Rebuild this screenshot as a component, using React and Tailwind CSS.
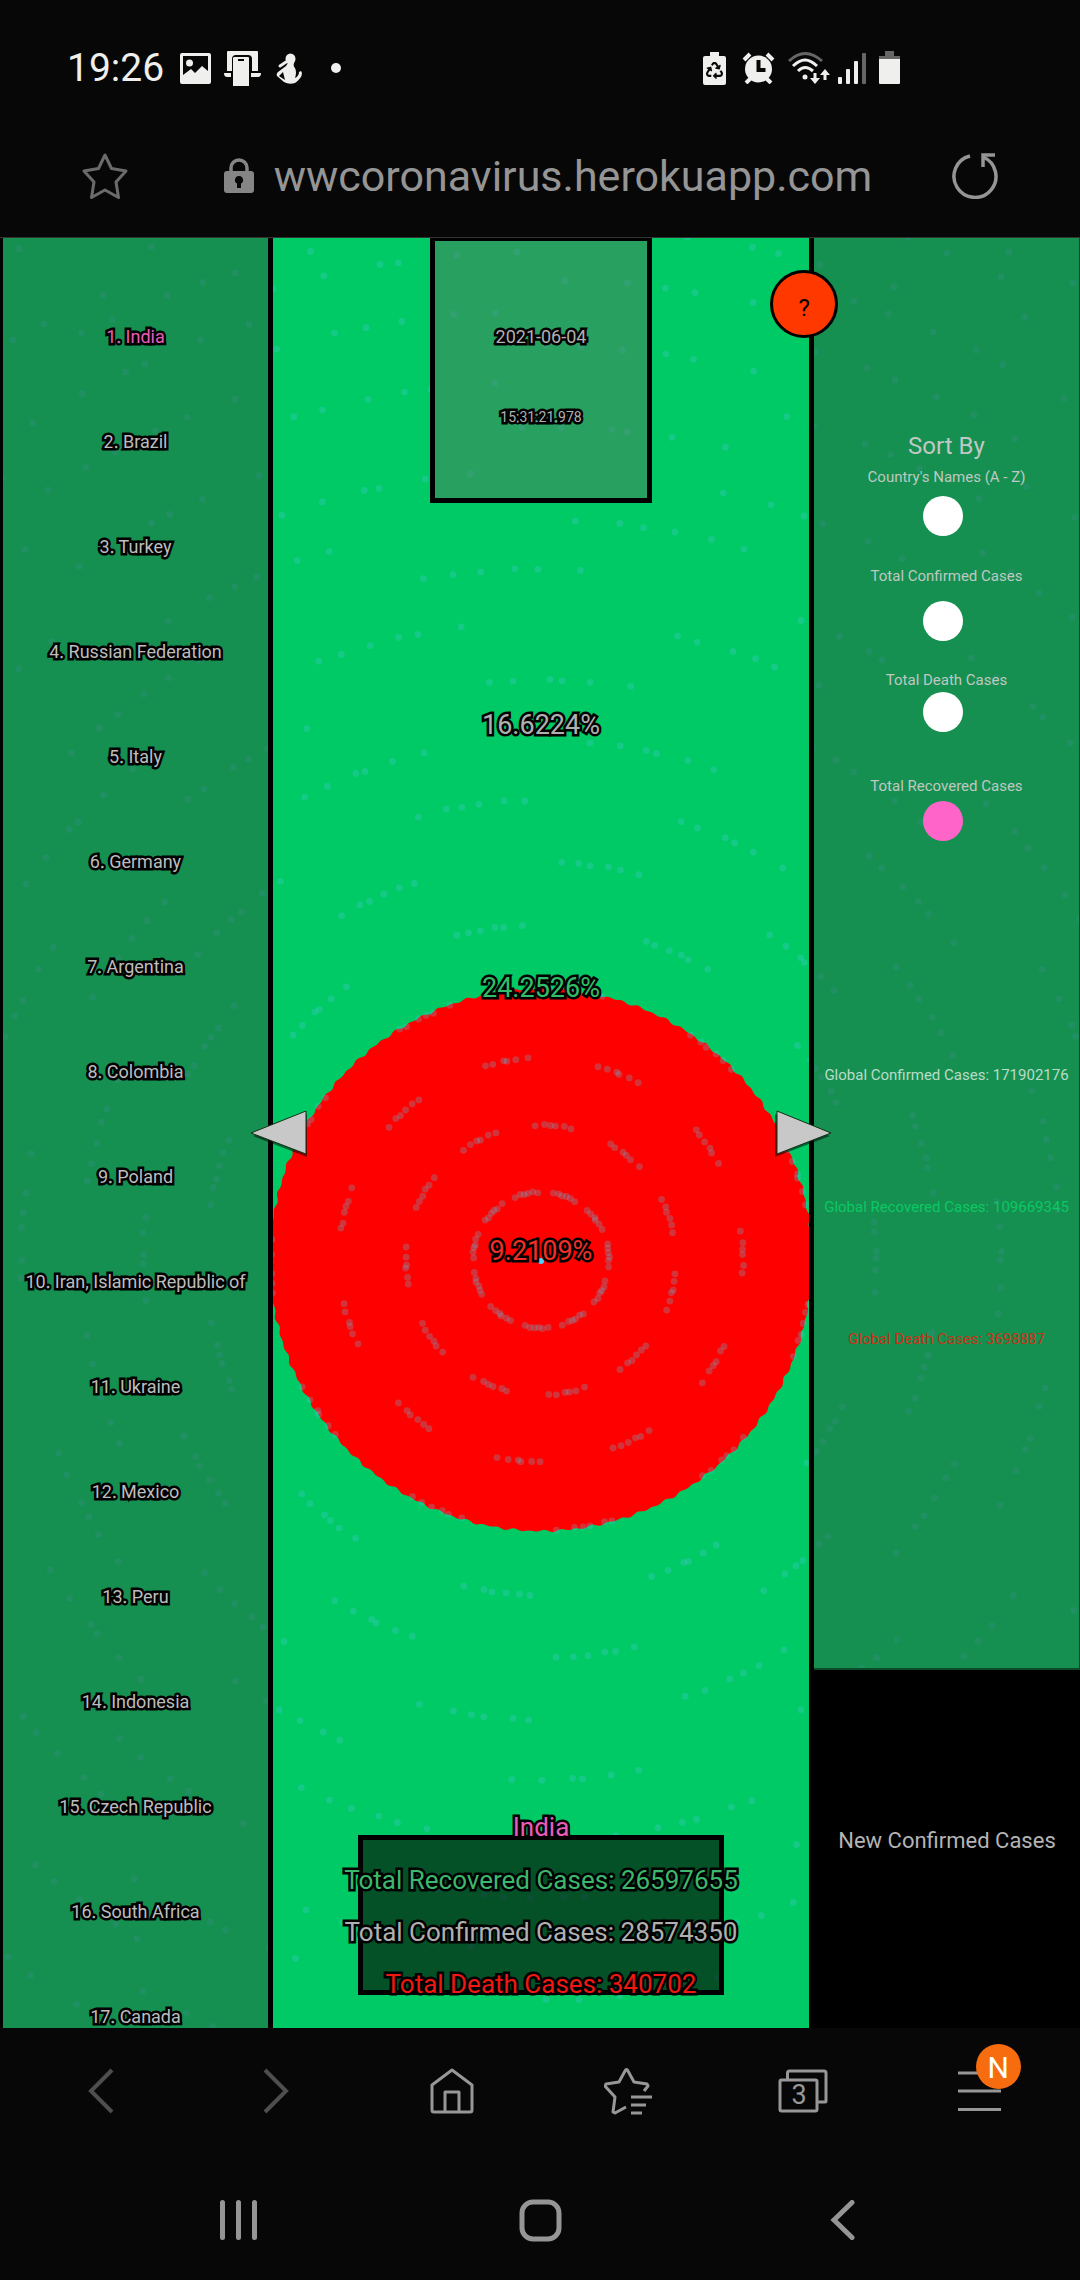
import React from "react";
import { FaRecycle } from "react-icons/fa";

const countries = [
  "India", "Brazil", "Turkey", "Russian Federation", "Italy", "Germany",
  "Argentina", "Colombia", "Poland", "Iran, Islamic Republic of", "Ukraine",
  "Mexico", "Peru", "Indonesia", "Czech Republic", "South Africa", "Canada",
];

const sortOptions = [
  { id: "name", label: "Country's Names (A - Z)", row: "h-[99px] gap-[7px]" },
  { id: "confirmed", label: "Total Confirmed Cases", row: "h-[104px] gap-[13px]" },
  { id: "death", label: "Total Death Cases", row: "h-[106px] gap-0" },
  { id: "recovered", label: "Total Recovered Cases", row: "h-[67px] gap-[3px]" },
];

const outline = "[-webkit-text-stroke:5px_#000] [paint-order:stroke_fill]";

const CX = 541;
const CY = 1022;
const radii = [68, 135, 202, 270, 335, 398, 460, 520, 580, 638, 691, 740, 789, 833, 878, 914, 949, 980, 1008, 1034, 1060, 1086, 1112, 1138];
const phases = [-69, -84, -67, -83, -66, -81, -98, -77, -88, -71, -93, -80];
const offsets = [-6.2, -3.8, -1.4, 0.3, 2.6, 5.6];

const dots = radii.flatMap((r, ring) =>
  Array.from({ length: 11 }).flatMap((_, c) =>
    offsets.map((o, k) => {
      const stretch = ring === 0 ? 1.7 : ring === 1 ? 1.3 : ring > 5 ? 1.15 : 1;
      const jitter = Math.sin(ring * 5.1 + c * 3.7 + k * 2.3);
      const a = ((phases[ring % 12] + c * 32.73 + o * stretch + jitter * 0.5) * Math.PI) / 180;
      const d = r + jitter * 0.7;
      return [(CX + d * Math.cos(a)).toFixed(1), (CY + d * Math.sin(a)).toFixed(1)];
    })
  )
);

const disc = Array.from({ length: 720 }, (_, i) => {
  const a = (i / 720) * Math.PI * 2;
  const r = 271 + 0.9 * Math.sin(a * 108) + 0.6 * Math.sin(a * 67);
  return `${(CX + r * Math.cos(a)).toFixed(1)},${(CY + r * Math.sin(a)).toFixed(1)}`;
}).join(" ");

function Field() {
  return (
    <svg className="absolute inset-0 h-full w-full" viewBox="0 0 1080 1790" preserveAspectRatio="xMidYMid slice" aria-hidden="true">
      <rect width="1080" height="1790" fill="#00ca65" />
      <polygon points={disc} fill="#ff0000" />
      {dots.map(([x, y], i) => (
        <circle key={i} cx={x} cy={y} r="3.4" fill="#50c8e6" fillOpacity="0.26" />
      ))}
      <circle cx="541" cy="1023" r="3" fill="#50d2ff" />
    </svg>
  );
}

function StatusBar() {
  return (
    <div className="flex h-24 items-center justify-between pr-[180px] pl-[67px] pt-10 text-[#efefed]">
      <div className="flex items-center">
        <span className="text-[39px] leading-[40px]">19:26</span>
        <svg className="ml-4 h-[31px] w-[31px]" viewBox="0 0 31 31" fill="currentColor">
          <path fillRule="evenodd" d="M2 0h27a2 2 0 0 1 2 2v27a2 2 0 0 1-2 2H2a2 2 0 0 1-2-2V2a2 2 0 0 1 2-2ZM3 3v19l8-6 4 4 7-7 6 5V3Z" />
          <circle cx="9.500" cy="10" r="3.500" />
        </svg>
        <svg className="ml-[13px] h-[35px] w-[37px]" viewBox="0 0 37 35" fill="currentColor">
          <path d="M4 0h29a1 1 0 0 1 1 1v19h-6V8q0-4-4-4H12q-4 0-4 4v12H3V1a1 1 0 0 1 1-1ZM0 22h7v4H3q-3 0-3-4ZM27 22h10q0 4-3 4h-7Z" />
          <path fillRule="evenodd" d="M11 6h13q1 0 1 1v28H9V7q0-1 2-1ZM14 8v2h6V8Z" />
        </svg>
        <svg className="ml-[15px] h-[31px] w-[28px]" viewBox="0 0 28 31" fill="currentColor">
          <ellipse cx="14.500" cy="6" rx="5" ry="5.500" />
          <path d="m4 13 6-4" fill="none" stroke="currentColor" strokeWidth="3" strokeLinecap="round" />
          <path fillRule="evenodd" d="M12 10h6q-1 3 1 5 2 4 0 10 4-2 4-6l2-1 1 2q0 5-7 10-6 2-11-1l-7-6q-1-2 1-4l8-6ZM7 19l-4 4 6 4Z" />
        </svg>
        <span className="ml-[27px] h-[10px] w-[10px] rounded-full bg-[#efefed]" />
      </div>
      <div className="flex items-center">
        <span className="relative flex h-[33px] w-[23px] items-center justify-center">
          <svg className="absolute inset-0 h-full w-full" viewBox="0 0 23 33" fill="currentColor">
            <path d="M7 0h9v4h5a2 2 0 0 1 2 2v25a2 2 0 0 1-2 2H2a2 2 0 0 1-2-2V6a2 2 0 0 1 2-2h5z" />
          </svg>
          <FaRecycle className="relative mt-1 h-[17px] w-[17px] text-[#070707]" />
        </span>
        <svg className="ml-4 h-[32px] w-[33px]" viewBox="0 0 33 32" fill="currentColor">
          <circle cx="16.500" cy="17" r="13.500" />
          <path d="M2 8 8 2M31 8l-6-6" stroke="currentColor" strokeWidth="4" />
          <path d="m4 31 5-5M29 31l-5-5" stroke="currentColor" strokeWidth="4" />
          <path d="M16.500 8v10h7" fill="none" stroke="#070707" strokeWidth="4" />
        </svg>
        <svg className="ml-[13px] h-[34px] w-[42px]" viewBox="0 0 42 34" fill="none" stroke="currentColor" strokeWidth="3">
          <path d="M1 10q16-15 33 0" stroke="#666" />
          <path d="M5 15q12-12 24 0M10 20q7-7 15 0" />
          <circle cx="17" cy="26" r="2.500" fill="currentColor" stroke="none" />
          <path d="M27 22v7M37 29v-7" />
          <path d="M22 27h10l-5 6zM32 24h10l-5-6z" fill="currentColor" stroke="none" />
        </svg>
        <svg className="ml-2 h-[31px] w-[28px]" viewBox="0 0 28 31" fill="currentColor">
          <rect y="24" width="4" height="7" rx="1" />
          <rect x="8" y="16" width="4" height="15" rx="1" />
          <rect x="16" y="8" width="4" height="23" rx="1" />
          <rect x="24" width="4" height="31" rx="1" fill="#666" />
        </svg>
        <svg className="ml-[13px] h-[34px] w-[21px]" viewBox="0 0 21 34">
          <path d="M6 0h9v5h6v4H0V5h6z" fill="#666" />
          <path d="M0 8h21v24q0 1-1 1H1q-1 0-1-1z" fill="#efefed" />
        </svg>
      </div>
    </div>
  );
}

function AddressBar() {
  return (
    <div className="flex h-[142px] items-center border-b border-[#333] pr-[82px] pl-[82px] pt-[18px]">
      <button aria-label="Add bookmark" className="text-[#6b6b6b]">
        <svg className="h-[46px] w-[46px]" viewBox="0 0 46 46" fill="none" stroke="currentColor" strokeWidth="3" strokeLinejoin="round">
          <path d="m23 2 6.500 13.500L44 18 34 29l2.500 15.500L23 37 9.500 44.500 12 29 2 18l14.500-2.500z" />
        </svg>
      </button>
      <div className="flex flex-1 items-center justify-center pl-4 text-[#959595]">
        <svg className="h-[35px] w-[30px]" viewBox="0 0 30 35" fill="none">
          <path d="M7 14V10a8 8 0 0 1 16 0v4" stroke="#858585" strokeWidth="3.500" />
          <path fillRule="evenodd" fill="#858585" d="M3 13h24a3 3 0 0 1 3 3v16a3 3 0 0 1-3 3H3a3 3 0 0 1-3-3V16a3 3 0 0 1 3-3Zm12 5a4 4 0 0 0-2 7.500V30h4v-4.500A4 4 0 0 0 15 18Z" />
        </svg>
        <span className="ml-5 text-[43px] leading-[50px]">wwcoronavirus.herokuapp.com</span>
      </div>
      <button aria-label="Reload" className="text-[#959595]">
        <svg className="h-[46px] w-[46px]" viewBox="0 0 46 46" fill="none" stroke="currentColor" strokeWidth="3.500">
          <path d="M18 3A21 21 0 1 0 31 4" />
          <path d="M43 2H31v12" />
        </svg>
      </button>
    </div>
  );
}

function BrowserTools() {
  return (
    <nav className="grid h-[126px] grid-cols-6 place-items-center px-[13px] text-[#979797]">
      <button aria-label="Back" className="text-[#4e4e4e]">
        <svg className="h-[46px] w-[26px]" viewBox="0 0 26 46" fill="none" stroke="currentColor" strokeWidth="4"><path d="M24 2 3 23l21 21" /></svg>
      </button>
      <button aria-label="Forward" className="text-[#4e4e4e]">
        <svg className="h-[46px] w-[26px]" viewBox="0 0 26 46" fill="none" stroke="currentColor" strokeWidth="4"><path d="m2 2 21 21L2 44" /></svg>
      </button>
      <button aria-label="Home">
        <svg className="h-[46px] w-[44px]" viewBox="0 0 44 46" fill="none" stroke="currentColor" strokeWidth="3" strokeLinejoin="round">
          <path d="M2 17 22 2l20 15v25q0 2-2 2H4q-2 0-2-2z" />
          <path d="M15 44V24h14v20" />
        </svg>
      </button>
      <button aria-label="Bookmarks">
        <svg className="h-[48px] w-[48px]" viewBox="0 0 48 48" fill="none" stroke="currentColor" strokeWidth="3" strokeLinejoin="round">
          <path d="m40 24 4-5-1-2-13-2-6-11q-1.500-3-3 0l-6 11-13 2-1 2 10 11-2 15 2 1 11-6" />
          <path d="M27 30h21M27 38h15M27 46h11" />
        </svg>
      </button>
      <button aria-label="Tabs, 3 open" className="relative h-[44px] w-[50px]">
        <svg className="absolute inset-0 h-full w-full" viewBox="0 0 50 44" fill="none" stroke="currentColor" strokeWidth="3">
          <rect x="2" y="11" width="37" height="31" rx="1.500" />
          <path d="M9.500 11V4q0-2 2-2H46q2 0 2 2v28q0 1-1 1h-8" />
        </svg>
        <span className="absolute top-[10px] left-[2px] w-[37px] text-center text-[27px] leading-[32px]">3</span>
      </button>
      <button aria-label="Menu" className="relative">
        <svg className="h-[42px] w-[43px]" viewBox="0 0 43 42" stroke="currentColor" strokeWidth="3"><path d="M0 3h43M0 21h43M0 39.500h43" /></svg>
        <span className="absolute -top-[26px] left-[18px] flex h-[45px] w-[45px] items-center justify-center rounded-full bg-[#f76c0f] pt-0.5 text-[30px] leading-none text-white">N</span>
      </button>
    </nav>
  );
}

function SystemNav() {
  return (
    <nav className="grid h-[126px] grid-cols-3 place-items-center px-[87px] pt-[6px] text-[#959595]">
      <button aria-label="Recent apps">
        <svg className="h-[40px] w-[37px]" viewBox="0 0 37 40" stroke="currentColor" strokeWidth="5" strokeLinecap="round"><path d="M2.500 2.500v35M18.500 2.500v35M34.500 2.500v35" /></svg>
      </button>
      <button aria-label="Home screen">
        <svg className="h-[43px] w-[43px]" viewBox="0 0 43 43" fill="none" stroke="currentColor" strokeWidth="5"><rect x="3" y="3" width="37" height="37" rx="11" /></svg>
      </button>
      <button aria-label="Go back">
        <svg className="h-[40px] w-[26px]" viewBox="0 0 26 40" fill="none" stroke="currentColor" strokeWidth="5" strokeLinecap="round"><path d="M23 2.500 5 20l18 17.500" /></svg>
      </button>
    </nav>
  );
}

export default function App() {
  return (
    <div className="flex h-screen w-full flex-col overflow-hidden bg-[#070707] font-[Roboto,sans-serif]">
      <header>
        <StatusBar />
        <AddressBar />
      </header>

      <main className="relative min-h-0 flex-1 overflow-hidden bg-black">
        <Field />
        <div className="relative grid h-full grid-cols-[270fr_536fr_271fr] grid-rows-[minmax(0,1fr)] border-l-[3px] border-black">
          <ol className="flex min-w-0 flex-col overflow-hidden border-r-[5px] border-black bg-[#2c563c]/50 bg-clip-padding pt-[46px]">
            {countries.map((name, i) => (
              <li key={name} className="flex h-[105px] shrink-0 items-center justify-center">
                <button className={`${outline} text-[18px] leading-6 whitespace-nowrap ${i === 0 ? "text-[#e85cb8]" : "text-[#bdbdbd]"}`}>
                  {i + 1}. {name}
                </button>
              </li>
            ))}
          </ol>

          <section className="flex min-w-0 flex-col items-center text-[#b0b0b0]">
            <div className="flex h-[265px] w-[222px] shrink-0 flex-col items-center border-5 border-t-[3px] border-black bg-[#50785c]/50 bg-clip-padding">
              <time className={`${outline} mt-[84px] text-[18px] leading-6`}>2021-06-04</time>
              <time className={`${outline} mt-14 text-[14px] leading-6`}>15:31:21.978</time>
            </div>
            <p className={`${outline} mt-[206px] text-[27px] leading-8`}>16.6224%</p>
            <p className={`${outline} mt-[231px] text-[27px] leading-8 text-[#30bf68]`}>24.2526%</p>
            <p className={`${outline} mt-[231px] text-[27px] leading-8 text-[#f03028]`}>9.2109%</p>
            <h2 className={`${outline} z-10 mt-auto -mb-2 text-[26px] leading-8 text-[#e85cb8]`}>India</h2>
            <div className="mb-[33px] flex h-[160px] w-[366px] shrink-0 flex-col items-center border-5 border-black bg-[#060f08]/65 bg-clip-padding pt-[14px] text-[26px] leading-[52px] whitespace-nowrap">
              <p className={`${outline} text-[#3cb86c]`}>Total Recovered Cases: 26597655</p>
              <p className={outline}>Total Confirmed Cases: 28574350</p>
              <p className={`${outline} text-[#f01810]`}>Total Death Cases: 340702</p>
            </div>
          </section>

          <aside className="grid min-w-0 grid-rows-[1432fr_358fr] border-l-[5px] border-black text-[#bfc8c2]">
            <div className="flex min-w-0 flex-col items-center border-r border-b-2 border-[#0c4a2a] bg-[#2c563c]/50 bg-clip-padding pt-[192px]">
              <fieldset className="flex flex-col items-center">
                <legend className="mb-[3px] w-full text-center text-[24px] leading-8">Sort By</legend>
                {sortOptions.map((o) => (
                  <label key={o.id} className={`flex flex-col items-center text-[15px] leading-6 ${o.row}`}>
                    {o.label}
                    <input
                      type="radio"
                      name="sort"
                      defaultChecked={o.id === "recovered"}
                      className="mr-[6px] h-10 w-10 shrink-0 appearance-none rounded-full bg-white checked:bg-[#ff64c8]"
                    />
                  </label>
                ))}
              </fieldset>
              <div className="mt-[168px] text-center text-[15px] leading-[132px] whitespace-nowrap">
                <p className="text-[#b9dcc8]">Global Confirmed Cases: 171902176</p>
                <p className="text-[#0ac864]">Global Recovered Cases: 109669345</p>
                <p className="text-[#c83218]">Global Death Cases: 3698887</p>
              </div>
            </div>
            <div className="flex min-w-0 items-center justify-center bg-black pb-4 text-[22px] leading-8 whitespace-nowrap text-[#b4b4b4]">New Confirmed Cases</div>
          </aside>
        </div>

        <button aria-label="Previous country" className="absolute top-[872px] left-[23.150%]">
          <svg className="h-[48px] w-[58px]" viewBox="0 0 58 48">
            <path d="m3 26 54-22v43z" fill="#000" fillOpacity="0.5" />
            <path d="M1 23 56 1v43z" fill="#c8c8c8" stroke="#103018" strokeWidth="1" />
          </svg>
        </button>
        <button aria-label="Next country" className="absolute top-[872px] right-[23%]">
          <svg className="h-[48px] w-[58px]" viewBox="0 0 58 48">
            <path d="M56 26 1 4v43z" fill="#000" fillOpacity="0.5" />
            <path d="M57 23 3 1v43z" fill="#c8c8c8" stroke="#103018" strokeWidth="1" />
          </svg>
        </button>
        <button aria-label="Help" className="absolute top-8 right-[22.400%] flex h-[68px] w-[68px] items-center justify-center rounded-full border-[3px] border-black bg-[#ff3800] pt-2 text-[24px] leading-8 text-black">?</button>
      </main>

      <footer>
        <BrowserTools />
        <SystemNav />
      </footer>
    </div>
  );
}
